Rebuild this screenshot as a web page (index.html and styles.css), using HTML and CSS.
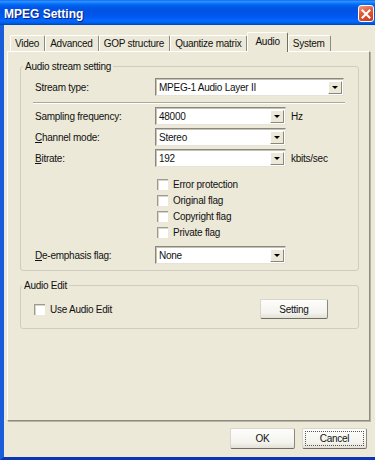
FILE: index.html
```html
<!DOCTYPE html>
<html lang="en">
<head>
    <meta charset="UTF-8">
    <title>MPEG Setting</title>
    <link rel="stylesheet" href="styles.css">
</head>
<body>
    <div class="window">
        <div class="titlebar">
            <span class="title">MPEG Setting</span>
            <span class="close">
                <svg width="10" height="10" viewBox="0 0 10 10">
                    <path d="M1.5 1.5 L8.5 8.5 M8.5 1.5 L1.5 8.5" stroke="#fff" stroke-width="2" stroke-linecap="square"/>
                </svg>
            </span>
        </div>

        <div class="frame">
            <div class="tabs">
                <span class="tab">Video</span>
                <span class="tab">Advanced</span>
                <span class="tab">GOP structure</span>
                <span class="tab">Quantize matrix</span>
                <span class="tab active">Audio</span>
                <span class="tab">System</span>
            </div>

            <div class="panel">
                <fieldset class="group group-stream">
                    <legend>Audio stream setting</legend>

                    <div class="row first">
                        <span class="label">Stream type:</span>
                        <span class="combo wide"><span class="value">MPEG-1 Audio Layer II</span><span class="drop"></span></span>
                    </div>

                    <div class="separator"></div>

                    <div class="row">
                        <span class="label">Sampling frequency:</span>
                        <span class="combo"><span class="value">48000</span><span class="drop"></span></span>
                        <span class="unit">Hz</span>
                    </div>
                    <div class="row">
                        <span class="label"><u>C</u>hannel mode:</span>
                        <span class="combo"><span class="value">Stereo</span><span class="drop"></span></span>
                    </div>
                    <div class="row">
                        <span class="label"><u>B</u>itrate:</span>
                        <span class="combo"><span class="value">192</span><span class="drop"></span></span>
                        <span class="unit">kbits/sec</span>
                    </div>

                    <div class="checks">
                        <label class="check"><span class="box"></span>Error protection</label>
                        <label class="check"><span class="box"></span>Original flag</label>
                        <label class="check"><span class="box"></span>Copyright flag</label>
                        <label class="check"><span class="box"></span>Private flag</label>
                    </div>

                    <div class="row last">
                        <span class="label"><u>D</u>e-emphasis flag:</span>
                        <span class="combo"><span class="value">None</span><span class="drop"></span></span>
                    </div>
                </fieldset>

                <fieldset class="group group-edit">
                    <legend>Audio Edit</legend>
                    <div class="edit-row">
                        <label class="check"><span class="box"></span>Use Audio Edit</label>
                        <button class="btn setting" type="button">Setting</button>
                    </div>
                </fieldset>
            </div>

            <div class="actions">
                <button class="btn" type="button">OK</button>
                <button class="btn focused" type="button"><span>Cancel</span></button>
            </div>
        </div>
    </div>
</body>
</html>
```

FILE: styles.css
```css
body {
    margin: 0;
    width: 375px;
    height: 460px;
    overflow: hidden;
    font-family: "Liberation Sans", Arial, sans-serif;
    font-size: 10px;
    letter-spacing: -0.25px;
    color: #111;
    background-color: #ece9d8;
}

.window {
    height: 460px;
    display: flex;
    flex-direction: column;
}

/* title bar */
.titlebar {
    height: 25px;
    flex: none;
    display: flex;
    align-items: center;
    justify-content: space-between;
    padding: 0 1px 0 4px;
    background: linear-gradient(180deg, #0058ee 0%, #3593ff 4%, #288eff 8%, #127dff 12%, #036ffc 16%, #0262ee 22%, #0057e5 30%, #0054e3 40%, #0055eb 60%, #005bf5 72%, #026afe 82%, #0062ef 90%, #0052d6 96%, #0040ab 100%);
}

.title {
    color: #fff;
    font-weight: bold;
    font-size: 12px;
    letter-spacing: 0;
    text-shadow: 1px 1px 0 #0a1b7a;
    margin-top: 2px;
}

.close {
    width: 16px;
    height: 17px;
    margin-top: 2px;
    box-sizing: border-box;
    border: 1px solid #fff;
    border-radius: 3px;
    background: linear-gradient(160deg, #f29a7e 0%, #e35c3a 40%, #c9381b 100%);
    display: flex;
    align-items: center;
    justify-content: center;
}

/* window body */
.frame {
    flex: 1;
    display: flex;
    flex-direction: column;
    border-left: 4px solid #1a5ddb;
    border-bottom: 3px solid #0b34b6;
    padding: 7px 5px 0 3px;
}

.tabs {
    height: 19px;
    display: flex;
    align-items: flex-end;
    padding-left: 3px;
    position: relative;
    z-index: 1;
}

.tab {
    height: 16px;
    line-height: 15px;
    padding: 0 5px 0 4px;
    box-sizing: border-box;
    border-top: 1px solid #fff;
    border-left: 1px solid #fff;
    border-right: 1px solid #8d8b7d;
    border-radius: 2px 2px 0 0;
    white-space: nowrap;
}

.tab.active {
    height: 20px;
    line-height: 17px;
    margin-bottom: -1px;
    padding: 0 7px;
    border-right-color: #716f64;
    background-color: #ece9d8;
}

.panel {
    height: 370px;
    flex: none;
    box-sizing: border-box;
    border: 1px solid;
    border-color: #fff #8d8b7d #8d8b7d #fff;
    box-shadow: 1px 1px 0 #b5b3a6;
    padding: 8px 10px 0 12px;
}

/* group boxes */
.group {
    margin: 0;
    min-width: 0;
    border: 1px solid #cfcdc0;
    border-radius: 3px;
    padding: 0 10px 6px 14px;
}

.group legend {
    padding: 0 2px;
    margin-left: -12px;
    line-height: 13px;
}

.row {
    height: 18px;
    display: flex;
    align-items: center;
    margin-top: 3px;
}

.row.first {
    margin-top: 5px;
}

.row.last {
    margin-top: 6px;
}

.label {
    width: 120px;
    flex: none;
    white-space: nowrap;
}

.separator {
    margin: 6px 3px 0 -2px;
    border-top: 1px solid #aca899;
    border-bottom: 1px solid #fff;
}

.combo {
    width: 131px;
    height: 18px;
    box-sizing: border-box;
    display: flex;
    align-items: center;
    justify-content: space-between;
    background-color: #fff;
    border: 1px solid;
    border-color: #8a887c #e6e4da #e6e4da #8a887c;
    box-shadow: inset 1px 1px 0 #c4c2b6;
    padding: 0 1px 0 3px;
}

.combo.wide {
    width: 189px;
}

.value {
    white-space: nowrap;
}

.drop {
    width: 14px;
    height: 13px;
    box-sizing: border-box;
    background-color: #ece9d8;
    border: 1px solid;
    border-color: #fff #8a887c #8a887c #fff;
    display: flex;
    align-items: center;
    justify-content: center;
}

.drop::after {
    content: "";
    border-left: 3px solid transparent;
    border-right: 3px solid transparent;
    border-top: 3px solid #000;
    margin-top: 1px;
}

.unit {
    margin-left: 5px;
}

/* checkboxes */
.checks {
    margin-top: 9px;
    padding-left: 122px;
}

.check {
    height: 16px;
    display: flex;
    align-items: center;
    gap: 5px;
    white-space: nowrap;
}

.box {
    width: 11px;
    height: 11px;
    box-sizing: border-box;
    background-color: #fff;
    border-top: 1px solid #9d9b8f;
    border-left: 1px solid #9d9b8f;
    box-shadow: inset 1px 1px 0 #d8d6cc;
}

.group-edit {
    margin-top: 8px;
    padding: 0 30px 9px 13px;
}

.edit-row {
    margin-top: 7px;
    height: 20px;
    display: flex;
    align-items: center;
    justify-content: space-between;
}

/* buttons */
.btn {
    font: inherit;
    letter-spacing: inherit;
    color: #111;
    width: 65px;
    height: 21px;
    padding: 0;
    border: 1px solid;
    border-color: #d8d6cc #8a887c #6f6d62 #d8d6cc;
    border-radius: 2px;
    background: linear-gradient(180deg, #fdfdfb 0%, #f4f3ee 70%, #e3e1d7 100%);
}

.btn.setting {
    width: 68px;
    height: 20px;
}

.actions {
    display: flex;
    justify-content: flex-end;
    gap: 7px;
    margin-top: 7px;
    padding-right: 3px;
}

.btn.focused span {
    display: block;
    margin: 2px;
    line-height: 13px;
    border: 1px dotted #555;
}
```
